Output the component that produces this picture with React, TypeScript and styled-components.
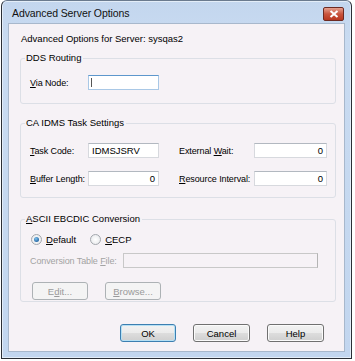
import React from "react";
import styled, { createGlobalStyle } from "styled-components";

const GlobalStyle = createGlobalStyle`
  html, body {
    margin: 0;
    padding: 0;
    background: #ffffff;
  }
  body {
    font-family: "Liberation Sans", Arial, sans-serif;
    font-size: 9.5px;
    color: #000;
  }
`;

const AdvancedServerOptions = () => {
  return (
    <StWindow>
      <StTitleBar>
        <StTitle>Advanced Server Options</StTitle>
        <StClose>
          <svg width="10" height="8" viewBox="0 0 10 8">
            <path d="M1.5 1 L8.5 7 M8.5 1 L1.5 7" stroke="#fff" strokeWidth="2" />
          </svg>
        </StClose>
      </StTitleBar>
      <StClient>
        <StHeader>Advanced Options for Server: sysqas2</StHeader>

        <StGroup $height={46} $gap={13} $pad={16}>
          <StLegend>DDS Routing</StLegend>
          <StRow>
            <StLabel $width={58}>
              <u>V</u>ia Node:
            </StLabel>
            <StInput $width={71} $focused>
              <StCaret />
            </StInput>
          </StRow>
        </StGroup>

        <StGroup $height={75} $gap={19} $pad={19}>
          <StLegend>CA IDMS Task Settings</StLegend>
          <StGrid>
            <StLabel>
              <u>T</u>ask Code:
            </StLabel>
            <StInput $width={71}>IDMSJSRV</StInput>
            <StLabel>
              External <u>W</u>ait:
            </StLabel>
            <StInput $width={73} $right>
              0
            </StInput>
            <StLabel>
              <u>B</u>uffer Length:
            </StLabel>
            <StInput $width={71} $right>
              0
            </StInput>
            <StLabel>
              <u>R</u>esource Interval:
            </StLabel>
            <StInput $width={73} $right>
              0
            </StInput>
          </StGrid>
        </StGroup>

        <StGroup $height={83} $gap={21} $pad={12}>
          <StLegend>
            <u>A</u>SCII EBCDIC Conversion
          </StLegend>
          <StRadioRow>
            <StRadio>
              <StRadioDot $checked />
              <span>
                <u>D</u>efault
              </span>
            </StRadio>
            <StRadio>
              <StRadioDot />
              <span>
                <u>C</u>ECP
              </span>
            </StRadio>
          </StRadioRow>
          <StRow $top={7}>
            <StLabel $width={93} $disabled>
              Conversion Table <u>F</u>ile:
            </StLabel>
            <StInput $width={195} $disabled />
          </StRow>
          <StSmallButtons>
            <StButton $disabled $width={56}>
              E<u>d</u>it...
            </StButton>
            <StButton $disabled $width={56}>
              <u>B</u>rowse...
            </StButton>
          </StSmallButtons>
        </StGroup>

        <StFooter>
          <StButton $default $width={56}>
            OK
          </StButton>
          <StButton $width={57}>Cancel</StButton>
          <StButton $width={57}>Help</StButton>
        </StFooter>
      </StClient>
    </StWindow>
  );
};

export default function App() {
  return (
    <>
      <GlobalStyle />
      <AdvancedServerOptions />
    </>
  );
}

const StWindow = styled.div`
  width: 351px;
  height: 359px;
  margin: 0 0 0 1px;
  box-sizing: border-box;
  border: 1px solid #2b2f36;
  border-top-color: #6a7a8e;
  border-radius: 6px 6px 0 0;
  background: linear-gradient(#c3d6ee, #c9dbf1 40px, #c2d6ef);
  display: flex;
  flex-direction: column;
  box-shadow: inset 0 0 0 1px #e3edf8;
`;

const StTitleBar = styled.div`
  height: 22px;
  flex-shrink: 0;
  display: flex;
  align-items: center;
  justify-content: space-between;
  padding: 0 7px 0 10px;
`;

const StTitle = styled.div`
  font-family: "Liberation Sans", Arial, sans-serif;
  font-size: 10.5px;
  letter-spacing: -0.1px;
  color: #111;
  padding-top: 2px;
`;

const StClose = styled.div`
  width: 19px;
  height: 12px;
  margin-top: 3px;
  border: 1px solid #6d2a22;
  border-radius: 2px;
  background: linear-gradient(#e5a08e, #c9543d 50%, #b8371f);
  display: flex;
  align-items: center;
  justify-content: center;
`;

const StClient = styled.div`
  flex: 1;
  margin: 0 6px 6px 6px;
  background: #f6f2f6;
  border: 1px solid #a8b8cc;
  padding: 9px 8px 0 11px;
  display: flex;
  flex-direction: column;
`;

const StHeader = styled.div`
  height: 12px;
  line-height: 12px;
  margin-left: 1px;
`;

const StGroup = styled.div<{ $height: number; $gap: number; $pad: number }>`
  position: relative;
  box-sizing: border-box;
  height: ${(p) => p.$height}px;
  margin-top: ${(p) => p.$gap}px;
  border: 1px solid #dcdfe6;
  border-radius: 3px;
  padding: ${(p) => p.$pad}px 0 0 9px;
  display: flex;
  flex-direction: column;
`;

const StLegend = styled.div`
  position: absolute;
  top: -7px;
  left: 4px;
  padding: 0 2px 0 1px;
  background: #f6f2f6;
  line-height: 12px;
`;

const StRow = styled.div<{ $top?: number }>`
  display: flex;
  align-items: center;
  height: 15px;
  margin-top: ${(p) => p.$top ?? 0}px;
`;

const StGrid = styled.div`
  display: grid;
  grid-template-columns: 58px 91px 75px 73px;
  row-gap: 13px;
  align-items: center;
`;

const StLabel = styled.div<{ $width?: number; $disabled?: boolean }>`
  ${(p) => (p.$width ? `width: ${p.$width}px;` : "")}
  flex-shrink: 0;
  white-space: nowrap;
  font-size: 9px;
  letter-spacing: -0.1px;
  color: ${(p) => (p.$disabled ? "#a3a3a3" : "#000")};
`;

const StInput = styled.div<{
  $width: number;
  $right?: boolean;
  $focused?: boolean;
  $disabled?: boolean;
}>`
  box-sizing: border-box;
  width: ${(p) => p.$width}px;
  height: 15px;
  line-height: 13px;
  padding: 0 3px;
  background: ${(p) => (p.$disabled ? "#f6f2f6" : "#ffffff")};
  border: 1px solid ${(p) => (p.$focused ? "#a9c8e6" : "#d7d9de")};
  border-top-color: ${(p) =>
    p.$focused ? "#5d97cc" : p.$disabled ? "#b4b4b4" : "#b2b8c0"};
  ${(p) => (p.$disabled ? "border-color: #c8c8c8; border-right-color: #b4b4b4;" : "")}
  display: flex;
  align-items: center;
  justify-content: ${(p) => (p.$right ? "flex-end" : "flex-start")};
`;

const StCaret = styled.div`
  width: 1px;
  height: 9px;
  margin-left: -1px;
  background: #555;
`;

const StRadioRow = styled.div`
  display: flex;
  gap: 14px;
  margin-left: 1px;
  height: 14px;
  align-items: center;
`;

const StRadio = styled.div`
  display: flex;
  align-items: center;
  gap: 4px;
`;

const StRadioDot = styled.div<{ $checked?: boolean }>`
  box-sizing: border-box;
  width: 11px;
  height: 11px;
  border-radius: 50%;
  border: 1px solid #a3a7ad;
  background: radial-gradient(circle, #ffffff 0, #e4e6e9 100%);
  display: flex;
  align-items: center;
  justify-content: center;
  &::after {
    content: "";
    display: ${(p) => (p.$checked ? "block" : "none")};
    width: 5px;
    height: 5px;
    border-radius: 50%;
    background: radial-gradient(circle at 40% 35%, #7fc3ee, #1c5c9c 80%);
  }
`;

const StSmallButtons = styled.div`
  display: flex;
  gap: 17px;
  margin: 14px 0 0 2px;
`;

const StFooter = styled.div`
  display: flex;
  justify-content: flex-end;
  gap: 17px;
  margin-top: 22px;
  padding-right: 12px;
`;

const StButton = styled.div<{
  $width: number;
  $default?: boolean;
  $disabled?: boolean;
}>`
  box-sizing: border-box;
  width: ${(p) => p.$width}px;
  height: 18px;
  border-radius: 3px;
  display: flex;
  align-items: center;
  justify-content: center;
  color: ${(p) => (p.$disabled ? "#9a9a9a" : "#000")};
  border: 1px solid
    ${(p) => (p.$default ? "#3c7fb1" : p.$disabled ? "#adb2b5" : "#707070")};
  background: ${(p) =>
    p.$disabled
      ? "#f4f4f4"
      : "linear-gradient(#f2f2f2 0, #ebebeb 50%, #dddddd 51%, #cfcfcf 100%)"};
  box-shadow: inset 0 0 0 1px
    ${(p) => (p.$default ? "#b6e0f4" : p.$disabled ? "#f4f4f4" : "#fbfbfb")};
`;
